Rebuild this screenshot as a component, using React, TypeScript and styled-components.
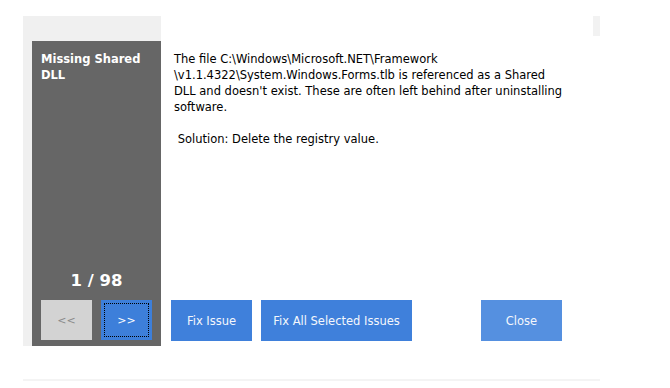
import styled, {createGlobalStyle} from 'styled-components';

const GlobalStyle = createGlobalStyle`
  html, body {
    margin: 0;
    padding: 0;
    background: #ffffff;
  }
  body {
    font-family: "DejaVu Sans", Tahoma, sans-serif;
  }
`;

const Page = styled.div`
  padding: 16px 0 0 23px;
`;
const Window = styled.div`
  width: 577px;
  height: 363px;
  display: flex;
  flex-direction: column;
  border-bottom: 2px solid #f4f4f4;
`;
const Main = styled.div`
  height: 330px;
  display: flex;
`;
const Sidebar = styled.div`
  width: 138px;
  background: #f0f0f0;
  padding: 25px 0 0 9px;
  box-sizing: border-box;
  display: flex;
`;
const Panel = styled.div`
  flex: 1;
  background: #666666;
  color: #ffffff;
  display: flex;
  flex-direction: column;
  padding: 10px 9px 6px 9px;
`;
const Title = styled.div`
  font-weight: bold;
  font-size: 11.5px;
  line-height: 16px;
`;
const Counter = styled.div`
  margin-top: auto;
  text-align: center;
  font-weight: bold;
  font-size: 16.5px;
  line-height: 20px;
  margin-bottom: 9px;
`;
const NavRow = styled.div`
  display: flex;
  gap: 9px;
`;
const NavButton = styled.button<{active?: boolean}>`
  width: 51px;
  height: 40px;
  border: none;
  padding: 0;
  font-family: inherit;
  font-size: 11px;
  background: ${p => (p.active ? '#3d7fda' : '#d3d3d3')};
  color: ${p => (p.active ? '#ffffff' : '#8a8a8a')};
  outline: ${p => (p.active ? '1px dotted #000' : 'none')};
  outline-offset: -4px;
`;
const Content = styled.div`
  flex: 1;
  display: flex;
  flex-direction: column;
`;
const TopStrip = styled.div`
  display: flex;
  justify-content: flex-end;
  height: 20px;
`;
const Stub = styled.div`
  width: 7px;
  background: #f2f2f2;
`;
const Message = styled.div`
  padding: 15px 0 0 13px;
  font-size: 11.5px;
  line-height: 16px;
  color: #000000;
`;
const Actions = styled.div`
  margin-top: auto;
  display: flex;
  gap: 9px;
  padding: 0 0 5px 10px;
`;
const ActionButton = styled.button<{light?: boolean; w: number}>`
  width: ${p => p.w}px;
  height: 41px;
  border: none;
  padding: 0;
  font-family: inherit;
  font-size: 11.5px;
  color: #f4f7fc;
  background: ${p => (p.light ? '#5590e0' : '#3f80db')};
  margin-left: ${p => (p.light ? '60px' : '0')};
`;

export default function App() {
  return (
    <>
      <GlobalStyle />
      <Page>
        <Window>
          <Main>
            <Sidebar>
              <Panel>
                <Title>Missing Shared<br />DLL</Title>
                <Counter>1 / 98</Counter>
                <NavRow>
                  <NavButton>&lt;&lt;</NavButton>
                  <NavButton active>&gt;&gt;</NavButton>
                </NavRow>
              </Panel>
            </Sidebar>
            <Content>
              <TopStrip><Stub /></TopStrip>
              <Message>
                The file C:\Windows\Microsoft.NET\Framework<br />
                \v1.1.4322\System.Windows.Forms.tlb is referenced as a Shared<br />
                DLL and doesn't exist. These are often left behind after uninstalling<br />
                software.<br />
                <br />
                &nbsp;Solution: Delete the registry value.
              </Message>
              <Actions>
                <ActionButton w={81}>Fix Issue</ActionButton>
                <ActionButton w={151}>Fix All Selected Issues</ActionButton>
                <ActionButton w={81} light>Close</ActionButton>
              </Actions>
            </Content>
          </Main>
        </Window>
      </Page>
    </>
  );
}
